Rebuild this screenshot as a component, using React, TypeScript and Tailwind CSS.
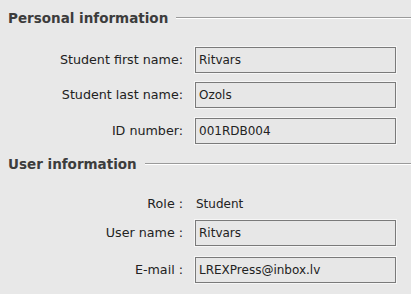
const font = { fontFamily: '"DejaVu Sans", Verdana, sans-serif' };

function SectionHeader({ title }: { title: string }) {
  return (
    <div className="flex h-[20px] items-center gap-[8px] pl-[8px]">
      <span className="text-[13.5px] font-bold text-[#3c3c3c]">{title}</span>
      <div className="h-[2px] flex-1 border-t border-b border-t-[#9a9a9a] border-b-white" />
    </div>
  );
}

function Field({ label, value }: { label: string; value: string }) {
  return (
    <div className="grid h-[26px] grid-cols-[183px_201px] items-center gap-x-[12px]">
      <span className="text-right text-[12.7px] text-[#222]">{label}</span>
      <div className="flex h-[26px] items-center border border-[#7a7a7a] bg-[#e7e7e7] pl-[3px] text-[12px] text-[#222] shadow-[0_0_0_1px_#f6f6f6]">
        {value}
      </div>
    </div>
  );
}

export default function App() {
  return (
    <div className="h-[294px] w-[411px] overflow-hidden bg-[#e8e8e8]" style={font}>
      <div className="pt-[8px]">
        <SectionHeader title="Personal information" />
      </div>
      <div className="mt-[19px]">
        <Field label="Student first name:" value="Ritvars" />
      </div>
      <div className="mt-[9px]">
        <Field label="Student last name:" value="Ozols" />
      </div>
      <div className="mt-[10px]">
        <Field label="ID number:" value="001RDB004" />
      </div>
      <div className="mt-[10px]">
        <SectionHeader title="User information" />
      </div>
      <div className="mt-[20px] grid h-[20px] grid-cols-[183px_201px] items-center gap-x-[12px]">
        <span className="text-right text-[12.7px] text-[#222]">Role :</span>
        <span className="pl-[1px] text-[12px] text-[#222]">Student</span>
      </div>
      <div className="mt-[6px]">
        <Field label="User name :" value="Ritvars" />
      </div>
      <div className="mt-[11px]">
        <Field label="E-mail :" value="LREXPress@inbox.lv" />
      </div>
    </div>
  );
}
